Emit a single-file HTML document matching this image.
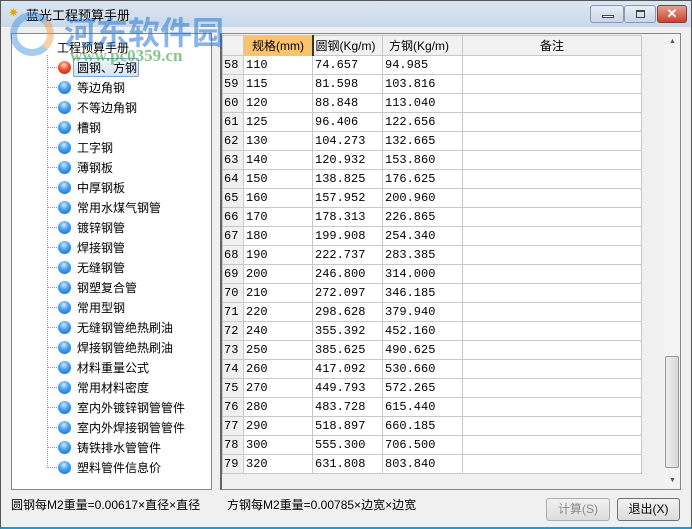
<!DOCTYPE html>
<html><head><meta charset="utf-8"><style>
*{margin:0;padding:0;box-sizing:border-box}
body{width:692px;height:529px;overflow:hidden;background:#2a6f9a;font-family:"Liberation Sans","Noto Sans CJK SC",sans-serif;font-size:12px;color:#000;position:relative}
.win{position:absolute;left:0;top:0;width:692px;height:529px;background:linear-gradient(#dbe6f2,#c9d9ea 26px,#f0f0f0 26px);border:1px solid #555;border-bottom:2px solid #1b9ad6}
.client{position:absolute;left:6px;top:27px;width:679px;height:498px;background:#f0f0f0}
.a{position:absolute;white-space:nowrap}
.tree{position:absolute;left:11px;top:33px;width:201px;height:457px;background:#fff;border:1px solid #828790}
.grid{position:absolute;left:220px;top:33px;width:461px;height:457px;background:#f0f0f0;border:1px solid #828790;border-left:2px solid #666;overflow:hidden}
table{border-collapse:collapse;position:absolute;left:0;top:1px;font-family:"Liberation Mono","Noto Sans CJK SC",monospace;font-size:12px}
td{border:1px solid #c8c8c8;height:19px;padding:0 0 0 2px;background:#fff;white-space:nowrap}
td.n{background:#f0f0f0;width:21px;padding-left:1px}
th{border:1px solid #c8c8c8;height:20px;font-weight:normal;background:#f2f2f2;text-align:left;padding-left:6px;font-family:"Liberation Sans","Noto Sans CJK SC",sans-serif;font-size:12px}
.dot{position:absolute;width:13px;height:13px;border-radius:50%;background:radial-gradient(circle at 45% 30%,#cfe9ff 0,#4aa4f0 40%,#0b62c8 100%)}
.btn{position:absolute;height:23px;border:1px solid #707070;border-radius:3px;background:linear-gradient(#f2f2f2,#dcdcdc);text-align:center;line-height:21px}
</style></head><body>
<div class="win"></div>
<div class="a" style="left:8px;top:5px;color:#e8a000;font-size:13px">✷</div>
<div class="a" style="left:26px;top:5px;font-size:13px">蓝光工程预算手册</div>
<div style="position:absolute;left:590px;top:5px;width:34px;height:18px;border:1px solid #8a9ab0;border-radius:3px;background:linear-gradient(#e6eef7,#c8d6e6)"><div style="position:absolute;left:11px;top:9px;width:12px;height:3px;border:1px solid #444;background:#fff"></div></div>
<div style="position:absolute;left:624px;top:5px;width:32px;height:18px;border:1px solid #8a9ab0;border-radius:3px;background:linear-gradient(#e6eef7,#c8d6e6)"><div style="position:absolute;left:11px;top:4px;width:9px;height:8px;border:1px solid #444;border-top-width:2px"></div></div>
<div style="position:absolute;left:657px;top:5px;width:30px;height:18px;border:1px solid #8a3a30;border-radius:3px;background:linear-gradient(#e8a090,#c8412e);color:#fff;font-weight:bold;text-align:center;line-height:16px;font-size:13px">✕</div>
<div class="client"></div>
<div class="tree"></div>
<div style="position:absolute;left:47px;top:55px;width:0;height:413px;border-left:1px dotted #999"></div>
<div class="a" style="left:57px;top:39px">工程预算手册</div>
<div id="items"></div>
<div class="grid">
<table id="t"></table>
<div style="position:absolute;left:442px;top:0;width:17px;height:455px;background:#f3f3f3">
<div class="a" style="left:5px;top:4px;font-size:7px;color:#555">▲</div>
<div style="position:absolute;left:1px;top:322px;width:14px;height:112px;border:1px solid #999;border-radius:2px;background:linear-gradient(90deg,#eee,#d8d8d8)"></div>
<div class="a" style="left:5px;top:443px;font-size:7px;color:#555">▼</div>
</div>
</div>
<div class="a" style="left:11px;top:496px">圆钢每M2重量=0.00617×直径×直径</div>
<div class="a" style="left:227px;top:496px">方钢每M2重量=0.00785×边宽×边宽</div>
<div class="btn" style="left:546px;top:498px;width:64px;color:#8a8a8a;border-color:#adadad">计算(S)</div>
<div class="btn" style="left:617px;top:498px;width:63px">退出(X)</div>
<div style="position:absolute;left:10px;top:12px;width:44px;height:44px;border-radius:50%;border:7px solid rgba(60,140,220,0.45);border-right-color:rgba(240,150,60,0.45)"></div>
<div class="a" style="left:64px;top:8px;font-size:32px;font-weight:bold;color:rgba(40,120,210,0.55);font-family:'Noto Sans CJK SC',sans-serif">河东软件园</div>
<div class="a" style="left:70px;top:46px;font-size:17px;font-weight:bold;color:rgba(60,160,60,0.6);font-family:'Liberation Serif',serif">www.pc0359.cn</div>
<script>
var names=["圆钢、方钢","等边角钢","不等边角钢","槽钢","工字钢","薄钢板","中厚钢板","常用水煤气钢管","镀锌钢管","焊接钢管","无缝钢管","钢塑复合管","常用型钢","无缝钢管绝热刷油","焊接钢管绝热刷油","材料重量公式","常用材料密度","室内外镀锌钢管管件","室内外焊接钢管管件","铸铁排水管管件","塑料管件信息价"];
var h="";names.forEach(function(n,i){var y=67+i*20;
h+='<div style="position:absolute;left:48px;top:'+y+'px;width:9px;border-top:1px dotted #999"></div>';
h+='<div class="dot" style="left:58px;top:'+(y-6)+'px'+(i==0?';background:radial-gradient(circle at 45% 30%,#ffd0c0 0,#f05030 45%,#b01808 100%)':'')+'"></div>';
if(i==0)h+='<div style="position:absolute;left:73px;top:'+(y-9)+'px;width:66px;height:19px;border:1px solid #7da2ce;border-radius:2px;background:linear-gradient(#f2f7fd,#d4e4f6)"></div>';
h+='<div class="a" style="left:77px;top:'+(y-8)+'px">'+n+'</div>';});
document.getElementById("items").innerHTML=h;
var d=[[110,"74.657","94.985"],[115,"81.598","103.816"],[120,"88.848","113.040"],[125,"96.406","122.656"],[130,"104.273","132.665"],[140,"120.932","153.860"],[150,"138.825","176.625"],[160,"157.952","200.960"],[170,"178.313","226.865"],[180,"199.908","254.340"],[190,"222.737","283.385"],[200,"246.800","314.000"],[210,"272.097","346.185"],[220,"298.628","379.940"],[240,"355.392","452.160"],[250,"385.625","490.625"],[260,"417.092","530.660"],[270,"449.793","572.265"],[280,"483.728","615.440"],[290,"518.897","660.185"],[300,"555.300","706.500"],[320,"631.808","803.840"]];
var t='<tr><th style="width:21px"></th><th style="width:69px;background:#fbc36e;border-right:2px solid #333;padding-left:8px">规格(mm)</th><th style="width:70px;padding-left:2px">圆钢(Kg/m)</th><th style="width:80px">方钢(Kg/m)</th><th style="width:179px;text-align:center;padding:0">备注</th></tr>';
d.forEach(function(r,i){t+='<tr><td class="n">'+(58+i)+'</td><td>'+r[0]+'</td><td>'+r[1]+'</td><td>'+r[2]+'</td><td></td></tr>';});
document.getElementById("t").innerHTML=t;
</script>
</body></html>
